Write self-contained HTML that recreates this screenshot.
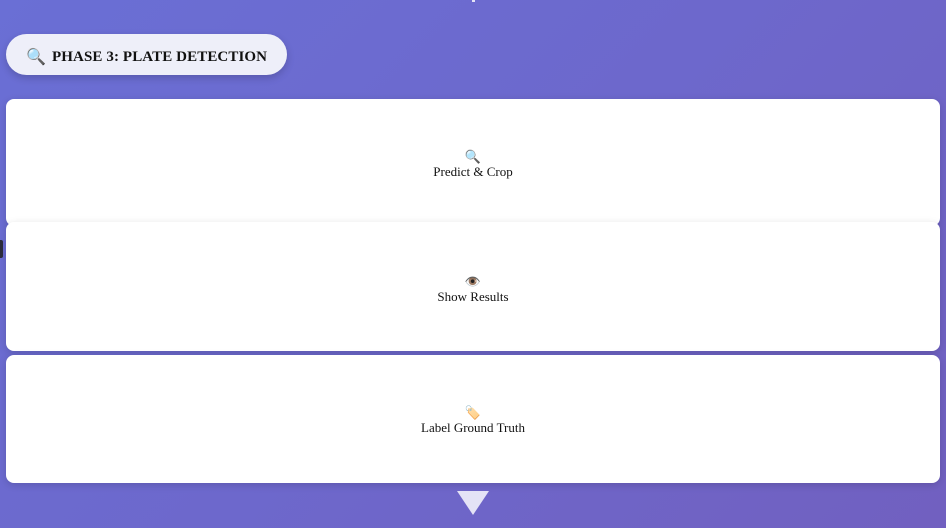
<!DOCTYPE html>
<html><head><meta charset="utf-8"><style>
html,body{margin:0;padding:0;width:946px;height:528px;overflow:hidden;}
body{background:linear-gradient(135deg,#6a6fd5 0%,#6d68cc 50%,#7160c0 100%);font-family:"Liberation Serif",serif;position:relative;}
.pill{position:absolute;left:6px;top:34px;width:281px;height:41px;border-radius:21px;background:#eeeff9;box-shadow:0 3px 8px rgba(0,0,0,.18);display:flex;align-items:center;box-sizing:border-box;padding-left:20px;padding-top:5px;font-weight:bold;font-size:15px;color:#111;letter-spacing:.1px;}
.pill .ic{font-size:16px;margin-right:6px;}
.card{position:absolute;left:6px;width:934px;background:#fff;border-radius:8px;box-shadow:0 2px 8px rgba(0,0,0,.15);text-align:center;font-size:13px;color:#111;}
.card .in{position:absolute;left:0;right:0;line-height:15px;}
.card .e{font-size:13px;display:block;}
.tri{position:absolute;left:457px;top:491px;width:0;height:0;border-left:16px solid transparent;border-right:16px solid transparent;border-top:24px solid #e4e3f6;}
.topar{position:absolute;left:472px;top:0;width:3px;height:2px;background:#e4e3f6;}
.mark{position:absolute;left:0;top:240px;width:3px;height:18px;background:#2b2b3a;border-radius:0 2px 2px 0;}
</style></head><body>
<div class="topar"></div>
<div class="pill"><span class="ic">🔍</span>PHASE 3: PLATE DETECTION</div>
<div class="card" style="top:99px;height:127px;"><div class="in" style="top:50px;"><span class="e">🔍</span>Predict &amp; Crop</div></div>
<div class="card" style="top:222px;height:129px;"><div class="in" style="top:52px;"><span class="e">👁️</span>Show Results</div></div>
<div class="mark"></div>
<div class="card" style="top:355px;height:128px;"><div class="in" style="top:50px;"><span class="e">🏷️</span>Label Ground Truth</div></div>
<div class="tri"></div>
</body></html>
